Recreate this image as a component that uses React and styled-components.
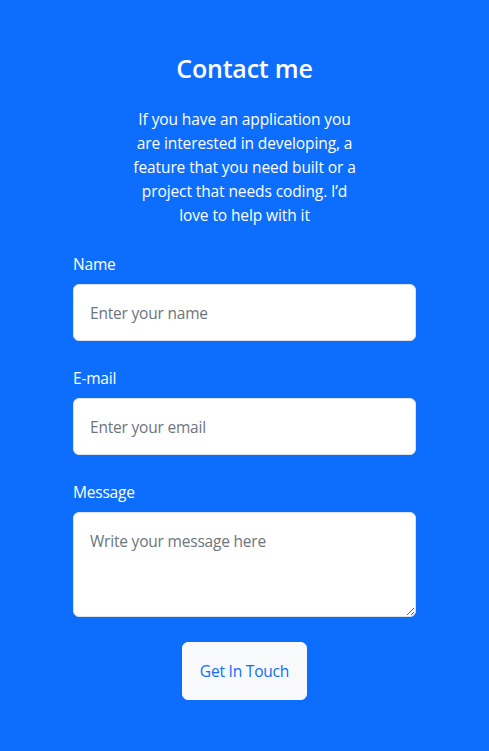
import React from "react";
import styled, { createGlobalStyle } from "styled-components";

const Global = createGlobalStyle`
  html, body { margin: 0; padding: 0; background: #0d6efd; }
  body { font-family: "Open Sans", "Noto Sans", sans-serif; -webkit-font-smoothing: antialiased; }
  * { box-sizing: border-box; }
`;

const Page = styled.section`
  background: #0d6efd;
  min-height: 751px;
  padding: 53px 73px 52px;
  display: flex;
  flex-direction: column;
  align-items: center;
  color: #fff;
`;

const Title = styled.h2`
  margin: 0 0 23px;
  font-size: 25px;
  line-height: 31px;
  font-weight: 600;
  letter-spacing: -0.2px;
`;

const Intro = styled.p`
  margin: 0 0 25px;
  width: 232px;
  text-align: center;
  font-size: 15.5px;
  line-height: 24px;
  letter-spacing: -0.1px;
`;

const Form = styled.form`
  width: 100%;
  display: flex;
  flex-direction: column;
  gap: 25px;
`;

const Field = styled.div`
  display: flex;
  flex-direction: column;
  gap: 8px;
`;

const Label = styled.label`
  font-size: 15.5px;
  line-height: 24px;
  letter-spacing: -0.2px;
`;

const inputBase = `
  width: 100%;
  border: 1px solid #dee2e6;
  border-radius: 6px;
  background: #fff;
  padding: 16px;
  font-family: inherit;
  font-size: 15.5px;
  line-height: 24px;
  letter-spacing: -0.2px;
  color: #212529;
  outline: none;
  &::placeholder { color: #6c757d; opacity: 1; }
`;

const Input = styled.input`
  ${inputBase}
  height: 57px;
`;

const TextArea = styled.textarea`
  ${inputBase}
  height: 105px;
  resize: vertical;
  display: block;
`;

const Actions = styled.div`
  display: flex;
  justify-content: center;
`;

const Button = styled.button`
  width: 125px;
  height: 58px;
  border: 1px solid #f8f9fa;
  border-radius: 6px;
  background: #f8f9fa;
  color: #0d6efd;
  font-family: inherit;
  font-size: 15.5px;
  letter-spacing: -0.2px;
  cursor: pointer;
`;

export default function App() {
  return (
    <>
      <Global />
      <Page>
        <Title>Contact me</Title>
        <Intro>
          If you have an application you are interested in developing, a feature that you need built or a project that needs coding. I’d love to help with it
        </Intro>
        <Form onSubmit={(e) => e.preventDefault()}>
          <Field>
            <Label htmlFor="name">Name</Label>
            <Input id="name" type="text" placeholder="Enter your name" />
          </Field>
          <Field>
            <Label htmlFor="email">E-mail</Label>
            <Input id="email" type="email" placeholder="Enter your email" />
          </Field>
          <Field>
            <Label htmlFor="message">Message</Label>
            <TextArea id="message" placeholder="Write your message here" />
          </Field>
          <Actions>
            <Button type="submit">Get In Touch</Button>
          </Actions>
        </Form>
      </Page>
    </>
  );
}
